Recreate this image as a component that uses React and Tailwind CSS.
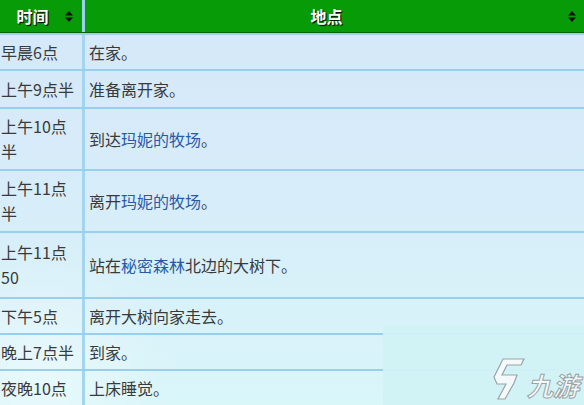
import React from "react";

const rows = [
  { time: ["早晨6点"], place: [["在家。"]], h: "h-[36px]" },
  { time: ["上午9点半"], place: [["准备离开家。"]], h: "h-[38px]" },
  { time: ["上午10点", "半"], place: [["到达"], ["玛妮的牧场", true], ["。"]], h: "h-[62px]" },
  { time: ["上午11点", "半"], place: [["离开"], ["玛妮的牧场", true], ["。"]], h: "h-[62px]" },
  { time: ["上午11点", "50"], place: [["站在"], ["秘密森林", true], ["北边的大树下。"]], h: "h-[66px]" },
  { time: ["下午5点"], place: [["离开大树向家走去。"]], h: "h-[36px]" },
  { time: ["晚上7点半"], place: [["到家。"]], h: "h-[36px]" },
  { time: ["夜晚10点"], place: [["上床睡觉。"]], h: "h-[36px]" },
];

function SortIcon() {
  return (
    <svg width="8" height="11" viewBox="0 0 8 11">
      <path d="M4 0 L8 4.5 L0 4.5 Z" fill="#111" />
      <path d="M0 6.5 L8 6.5 L4 11 Z" fill="#111" />
    </svg>
  );
}

export default function App() {
  return (
    <div
      className="relative w-[584px] h-[405px] overflow-hidden bg-gradient-to-b from-[#cfe5f8] via-[#d3ebf8] to-[#d5f5f8] text-[16px] text-[#3a3a3a]"
      style={{ fontFamily: '"Noto Sans CJK SC", "Noto Sans", sans-serif' }}
    >
      {/* cloud glow bottom-left */}
      <div className="absolute left-[-40px] top-[300px] w-[160px] h-[140px] rounded-full bg-white/40 blur-2xl" />

      <div className="relative">
        {/* Header */}
        <div className="flex h-[33px] bg-[#089b08] border-b border-[#05610a] text-white font-bold text-[16px] [text-shadow:1px_1px_1px_#000]">
          <div className="w-[85px] border-r-[3px] border-[#9bd0ee] flex items-center pr-[9px]">
            <span className="flex-1 text-center">时间</span>
            <SortIcon />
          </div>
          <div className="flex-1 flex items-center pr-[8px]">
            <span className="flex-1 text-center">地点</span>
            <SortIcon />
          </div>
        </div>

        {rows.map((r, i) => (
          <div key={i} className={`flex ${r.h} border-t-2 border-[#98cfec] bg-white/10`}>
            <div className="w-[85px] border-r-[3px] border-[#a3d5ef] pl-[1px] flex flex-col justify-center leading-[25px]">
              {r.time.map((t, j) => (
                <div key={j} className="whitespace-nowrap">{t}</div>
              ))}
            </div>
            <div className="flex-1 pl-[4px] flex items-center whitespace-nowrap">
              {r.place.map(([t, link], j) => (
                <span key={j} className={link ? "text-[#2a5aa6]" : ""}>
                  {t}
                </span>
              ))}
            </div>
          </div>
        ))}
      </div>

      {/* watermark */}
      <div className="absolute left-[383px] top-[325px] w-[201px] h-[80px] bg-[#d2f2f5]/95">
        <div className="absolute left-[110px] top-[32px] flex items-end gap-[2px] whitespace-nowrap">
          <svg width="32" height="44" viewBox="0 0 32 44">
            <path
              d="M10 2 L31 2 L28 8 L14 8 L9 18 L24 18 L21 26 L12 42 L5 42 L13 27 L4 27 L1 20 Z"
              fill="#f4fafb"
              stroke="#9aa3a6"
              strokeWidth="1.2"
            />
          </svg>
          <span className="italic font-bold text-[26px] leading-[32px] text-[#f4fafb] [-webkit-text-stroke:1px_#9aa3a6]">
            九游
          </span>
        </div>
      </div>
    </div>
  );
}
